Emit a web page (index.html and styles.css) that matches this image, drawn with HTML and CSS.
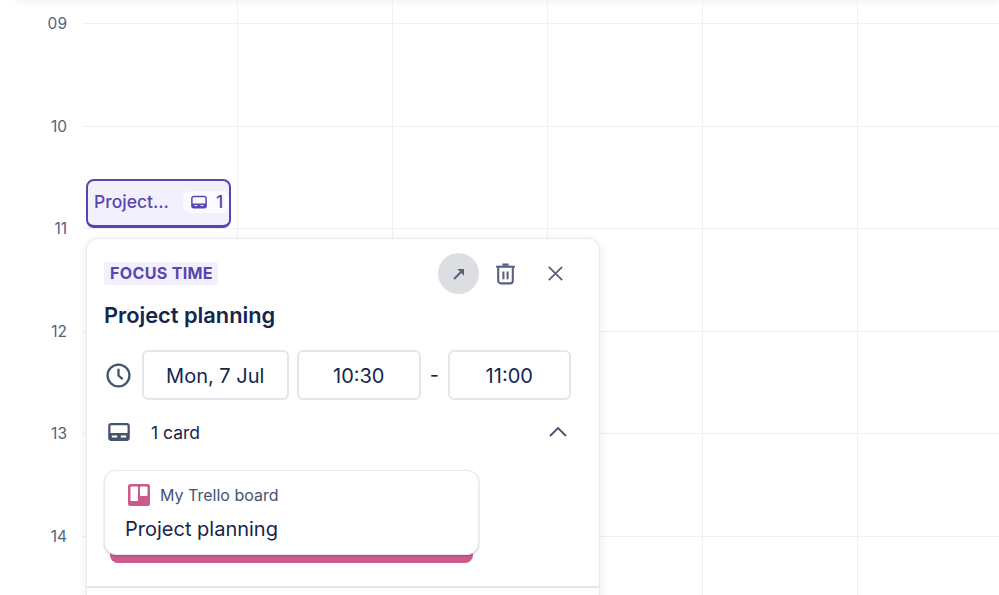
FILE: index.html
```html
<!DOCTYPE html>
<html lang="en">
<head>
<meta charset="utf-8">
<title>Calendar</title>
<link rel="stylesheet" href="styles.css">
</head>
<body>
<div class="topbar"></div>
<main class="calendar">
  <div class="hour hour-lead"><span class="label"></span><div class="slots"></div></div>
  <div class="hour"><span class="label">09</span><div class="slots"></div></div>
  <div class="hour"><span class="label">10</span><div class="slots"></div></div>
  <div class="hour"><span class="label">11</span><div class="slots"></div></div>
  <div class="hour"><span class="label">12</span><div class="slots"></div></div>
  <div class="hour"><span class="label">13</span><div class="slots"></div></div>
  <div class="hour"><span class="label">14</span><div class="slots"></div></div>

  <div class="event">
    <span class="event-title">Project...</span>
    <span class="event-badge">
      <svg class="icon-tray-sm" viewBox="0 0 24 24"><path d="M5 4.500h14a2.500 2.500 0 0 1 2.500 2.500v10a2.500 2.500 0 0 1-2.500 2.500H5A2.500 2.500 0 0 1 2.500 17V7A2.500 2.500 0 0 1 5 4.500Z" fill="none" stroke="currentColor" stroke-width="2"/><path d="M2.500 14h19v3a2.500 2.500 0 0 1-2.500 2.500H5A2.500 2.500 0 0 1 2.500 17Z" fill="currentColor"/><path d="M6 16.700h4M14 16.700h4" stroke="#f3f0fd" stroke-width="1.300"/></svg>
      1
    </span>
  </div>

  <section class="popover">
    <header class="pop-head">
      <span class="tag">FOCUS TIME</span>
      <div class="actions">
        <button class="action action-active" aria-label="Open">
          <svg viewBox="0 0 24 24" class="icon-arrow"><path d="M6 18 15 9" fill="none" stroke="currentColor" stroke-width="2.400"/><path d="M10 6h8v8Z" fill="currentColor"/></svg>
        </button>
        <button class="action action-trash" aria-label="Delete">
          <svg viewBox="0 0 24 24" class="icon-trash"><path d="M3 5.500h18" stroke="currentColor" stroke-width="2" fill="none"/><path d="M9 3.500h6" stroke="currentColor" stroke-width="2.200" fill="none"/><path d="M5 6v13a2.500 2.500 0 0 0 2.500 2.500h9A2.500 2.500 0 0 0 19 19V6" fill="none" stroke="currentColor" stroke-width="2"/><path d="M10 10v7.500M14 10v7.500" stroke="currentColor" stroke-width="2"/></svg>
        </button>
        <button class="action action-close" aria-label="Close">
          <svg viewBox="0 0 24 24" class="icon-close"><path d="M5 5l14 14M19 5 5 19" fill="none" stroke="currentColor" stroke-width="1.800"/></svg>
        </button>
      </div>
    </header>
    <h2 class="pop-title">Project planning</h2>
    <div class="time-row">
      <svg viewBox="0 0 24 24" class="icon-clock"><circle cx="12" cy="12" r="10.500" fill="none" stroke="currentColor" stroke-width="2.200"/><path d="M12 5.500V12l4 3.500" fill="none" stroke="currentColor" stroke-width="2.200"/></svg>
      <div class="field field-date">Mon, 7 Jul</div>
      <div class="field field-start">10:30</div>
      <span class="dash">-</span>
      <div class="field field-end">11:00</div>
    </div>
    <div class="cards-row">
      <svg class="icon-tray" viewBox="0 0 24 20"><path fill-rule="evenodd" d="M3.500 0h17A3.500 3.500 0 0 1 24 3.500v13a3.500 3.500 0 0 1-3.500 3.500h-17A3.500 3.500 0 0 1 0 16.500v-13A3.500 3.500 0 0 1 3.500 0ZM3.500 2.500a1 1 0 0 0-1 1V11h19V3.500a1 1 0 0 0-1-1ZM4 14v2h6v-2ZM14 14v2h6v-2Z" fill="currentColor"/></svg>
      <span class="cards-count">1 card</span>
      <svg class="icon-chevron" viewBox="0 0 18 10"><path d="M1 9l8-8 8 8" fill="none" stroke="currentColor" stroke-width="1.800"/></svg>
    </div>
    <div class="card-wrap">
      <article class="card">
        <div class="card-board">
          <svg class="icon-trello" viewBox="0 0 22 22"><rect width="22" height="22" rx="2.500" fill="#cb5a8d"/><rect x="2.500" y="2.500" width="7.500" height="14.500" rx="1" fill="#fff"/><rect x="12" y="2.500" width="7.500" height="9.500" rx="1" fill="#fff"/></svg>
          <span>My Trello board</span>
        </div>
        <div class="card-title">Project planning</div>
      </article>
    </div>
    <div class="pop-foot"></div>
  </section>
</main>
</body>
</html>
```
FILE: styles.css
```css
* { box-sizing: border-box; }
html, body { margin: 0; height: 100%; }
body {
  width: 999px;
  height: 595px;
  overflow: hidden;
  background: #fff;
  font-family: Inter, "Liberation Sans", sans-serif;
  color: #14264d;
}
.topbar {
  position: absolute;
  left: 16px;
  right: 0;
  top: -4px;
  height: 4px;
  box-shadow: 0 1px 6px rgba(23, 43, 77, 0.10);
}
.calendar { position: relative; height: 595px; overflow: hidden; }
.hour { display: flex; height: 102.6px; }
.hour-lead { height: 23px; }
.hour-lead .slots { border-top: 0; }
.label {
  width: 83px;
  flex: none;
  margin-top: -9px;
  padding-right: 16px;
  text-align: right;
  font-size: 15.500px;
  line-height: 20px;
  color: #54617d;
}
.slots {
  flex: 1;
  border-top: 1px solid #eff0f3;
  background-image: linear-gradient(90deg, transparent 0 154px, #eff0f3 154px 155px);
  background-size: 155px 100%;
}
.event {
  position: absolute;
  left: 86px;
  top: 179px;
  width: 145px;
  height: 49px;
  display: flex;
  align-items: center;
  justify-content: space-between;
  padding: 0 0 3px 6px;
  border: 2px solid #5a45b0;
  border-bottom-width: 3px;
  border-radius: 8px;
  background: #f3f0fd;
  color: #5a45b0;
  font-size: 17.500px;
  font-weight: 500;
}
.event-badge {
  display: flex;
  align-items: center;
  gap: 8px;
  height: 22px;
  padding: 0 0 0 7px;
  border-radius: 7px;
  background: #fafaff;
  width: 46px;
}
.icon-tray-sm { width: 18px; height: 18px; flex: none; }
.popover {
  position: absolute;
  left: 86px;
  top: 238px;
  width: 514px;
  height: 380px;
  padding: 14px 17px 0;
  background: #fff;
  border: 1px solid #e8eaee;
  border-radius: 12px;
  box-shadow: 0 2px 10px rgba(23, 43, 77, 0.10);
}
.pop-head { display: flex; align-items: flex-start; justify-content: space-between; height: 42px; }
.tag {
  margin-top: 9px;
  padding: 0 5px 0 6px;
  height: 23px;
  line-height: 23px;
  border-radius: 3px;
  background: #f3f0fd;
  color: #5a45b0;
  font-size: 16.100px;
  font-weight: 700;
  letter-spacing: 0.300px;
}
.actions { display: flex; margin-right: 6px; }
.action {
  display: flex;
  align-items: center;
  justify-content: center;
  width: 41px;
  height: 41px;
  padding: 0;
  border: 0;
  border-radius: 50%;
  background: none;
  color: #56617c;
}
.action-active { background: #dcdee2; }
.action-trash { margin-left: 6px; }
.action-close { margin-left: 9px; }
.icon-arrow { width: 20px; height: 20px; }
.icon-trash { width: 25px; height: 25px; }
.icon-close { width: 23px; height: 23px; }
.pop-title {
  margin: 6px 0 0;
  font-size: 21.800px;
  line-height: 28px;
  font-weight: 600;
  color: #14264d;
}
.time-row { display: flex; align-items: center; margin-top: 21px; }
.icon-clock { width: 25px; height: 25px; flex: none; color: #44546f; margin: 0 11px 0 2px; }
.field {
  display: flex;
  align-items: center;
  justify-content: center;
  height: 50px;
  padding-top: 1px;
  border: 2px solid #e4e6eb;
  border-radius: 6px;
  font-size: 20px;
}
.field-date { width: 146.500px; margin-right: 8.500px; }
.field-start { width: 123.500px; }
.dash { width: 27.500px; text-align: center; font-size: 20px; }
.field-end { width: 122.500px; }
.cards-row { display: flex; align-items: center; height: 30px; margin-top: 17px; position: relative; }
.icon-tray { width: 22px; height: 18px; color: #44546f; margin-left: 4px; flex: none; }
.cards-count { margin-left: 21px; font-size: 17.500px; }
.icon-chevron { width: 18px; height: 10px; margin-left: auto; margin-right: 15px; color: #44546f; }
.card-wrap {
  margin-top: 23px;
  width: 375px;
  height: 93px;
  border-radius: 12px;
  position: relative;
}
.card-wrap::before {
  content: "";
  position: absolute;
  left: 6px;
  right: 6px;
  top: 30px;
  height: 63px;
  background: #cb5a8d;
  border-radius: 8px;
}
.card {
  position: relative;
  height: 85px;
  padding: 12px 20px 0;
  background: #fff;
  border: 1px solid #e8eaee;
  border-radius: 12px;
  box-shadow: 0 1px 2px rgba(23, 43, 77, 0.25);
}
.card-board {
  display: flex;
  align-items: center;
  gap: 10px;
  margin-left: 3px;
  height: 23px;
  font-size: 16px;
  color: #44546f;
}
.icon-trello { width: 22px; height: 22px; flex: none; }
.card-title { margin-top: 10px; font-size: 20px; line-height: 26px; color: #14264d; }
.pop-foot {
  position: absolute;
  left: 0;
  right: 0;
  top: 347px;
  border-top: 2px solid #e4e6ea;
}
```
